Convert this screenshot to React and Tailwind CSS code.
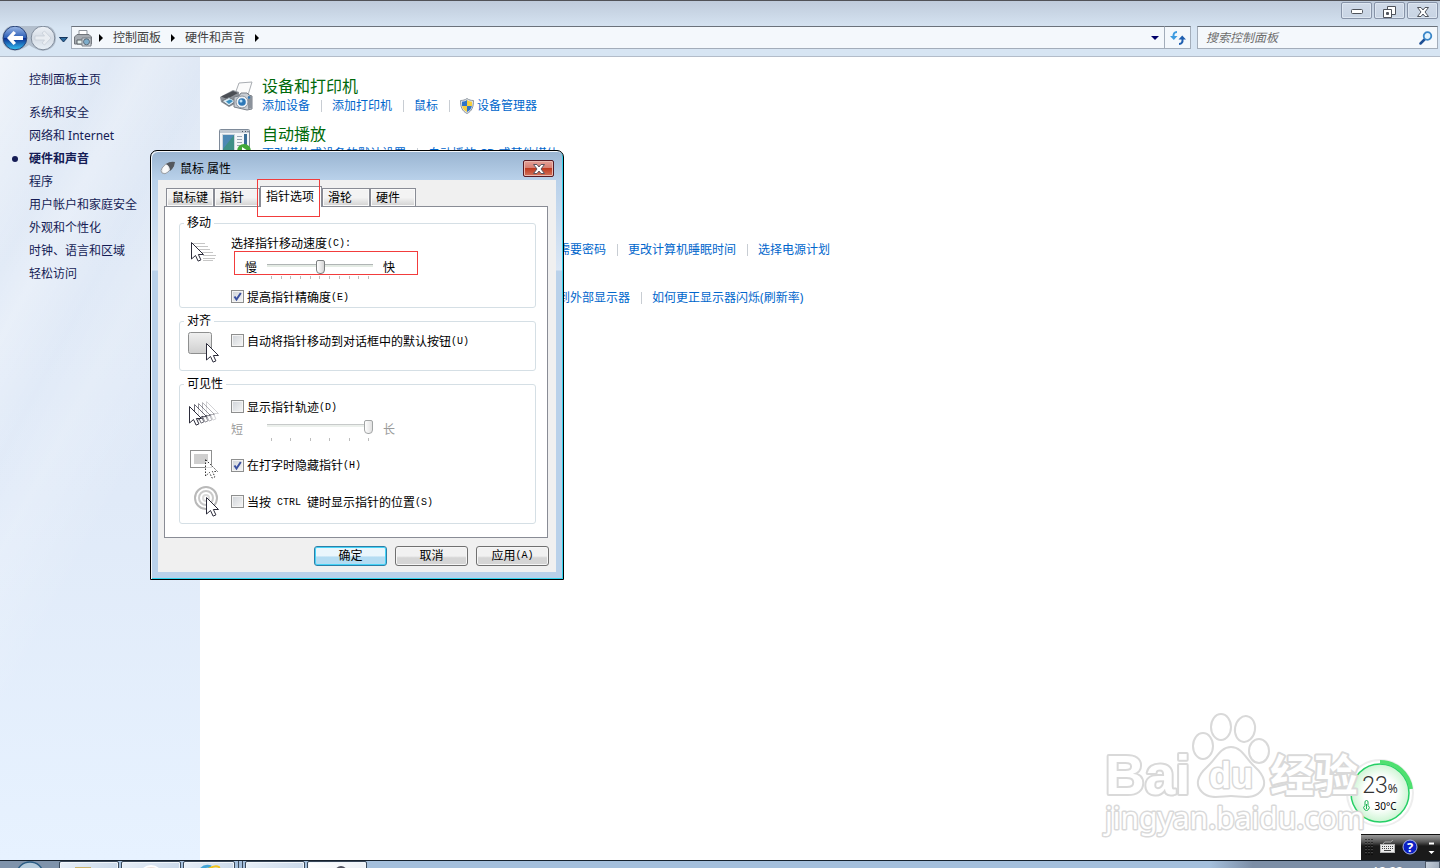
import React from 'react';
import clsx from 'clsx';

const NAV_ITEMS = [
  '系统和安全',
  '网络和 Internet',
  '硬件和声音',
  '程序',
  '用户帐户和家庭安全',
  '外观和个性化',
  '时钟、语言和区域',
  '轻松访问',
];

const CATEGORIES = [
  { title: '设备和打印机', icon: 'printer', links: ['添加设备', '添加打印机', '鼠标', '设备管理器'] },
  { title: '自动播放', icon: 'autoplay', links: ['更改媒体或设备的默认设置', '自动播放 CD 或其他媒体'] },
  { title: '声音', links: ['调整系统音量', '更改系统声音', '管理音频设备'] },
  {
    title: '电源选项',
    links: ['更改电池设置', '更改电源按钮的功能', '唤醒计算机时需要密码', '更改计算机睡眠时间', '选择电源计划'],
  },
  {
    title: '显示',
    links: ['放大或缩小文本和其他项目', '调整屏幕分辨率', '连接到外部显示器', '如何更正显示器闪烁(刷新率)'],
  },
];

const ARROW = 'M0 0V16.5L4 13L6.6 18.6L9.4 17.4L6.9 12H12Z';

const Cursor = ({ x = 0, y = 0, fill = '#fff', stroke = '#2b2b3a', dash, opacity = 1 }) => (
  <path
    d={ARROW}
    transform={`translate(${x + 0.5} ${y + 0.5})`}
    fill={fill}
    stroke={stroke}
    strokeDasharray={dash}
    opacity={opacity}
  />
);

const PrinterIcon = () => (
  <svg width="34" height="32" viewBox="0 0 34 32" aria-hidden="true">
    <path d="M16 13 20 2 33 1 29 14Z" fill="#fbfbfb" stroke="#a9adb2" />
    <path d="M1 16 14 9 20 11 20 21 10 26 2 21Z" fill="#8d9299" />
    <path d="M2 15.500 14 10 19 12 8 18Z" fill="#4b4f55" />
    <path d="M3 20 10 16.500 17 20 10 25Z" fill="#d7e8f2" stroke="#70757b" />
    <path d="M7 20.500 11 18.500 14 20 10 23Z" fill="#3a8fc0" />
    <path d="M15 16 20 15 22 12 28 12 30 14 33 15V28L28 29 15 26Z" fill="#c9ced4" stroke="#787f87" />
    <path d="M29 15H33V27L29 28Z" fill="#8b929b" />
    <circle cx="23" cy="21" r="6" fill="#eef2f6" stroke="#8a929c" />
    <circle cx="23" cy="21" r="3.800" fill="#2d78b8" />
    <circle cx="22" cy="20" r="1.500" fill="#b8def6" />
    <circle cx="30" cy="16.500" r="1.200" fill="#2d78b8" />
  </svg>
);

const AutoplayIcon = () => (
  <svg width="32" height="32" viewBox="0 0 32 32" aria-hidden="true">
    <rect x=".5" y=".5" width="30" height="30" rx="1" fill="#f4f6f8" stroke="#7e8a99" />
    <path d="M1 2.500H30" stroke="#c3cad3" strokeWidth="3" />
    <path d="M23 2.500h1M26 2.500h1M28.500 2.500h1" stroke="#4a5563" />
    <rect x="3.500" y="5.500" width="12" height="22" fill="#3f8f86" stroke="#ccd4dc" />
    <path d="M4 6H15L4 20Z" fill="#4d88b4" />
    <path d="M18 7.500h5M18 10.500h5M18 13.500h5M18 16.500h5" stroke="#9aa6b3" />
    <rect x="25" y="5" width="3" height="12" fill="#3a6d96" />
    <circle cx="25" cy="22" r="7" fill="#43a837" />
    <path d="M23 18 29 22 23 26Z" fill="#fff" />
  </svg>
);

const ShieldIcon = () => (
  <svg width="14" height="16" viewBox="0 0 14 16" className="mr-[3px]" aria-hidden="true">
    <path d="M7 .5C9 2 11 2.500 13.500 2.500 13.500 9 12 13 7 15.500 2 13 .5 9 .5 2.500 3 2.500 5 2 7 .5Z" fill="#dfe3e8" stroke="#8d959e" />
    <path d="M7 2C5.500 3 4 3.500 2 3.700V8H7Z" fill="#2f74c8" />
    <path d="M7 2C8.500 3 10 3.500 12 3.700V8H7Z" fill="#f7cf3c" />
    <path d="M2.200 8H7V14C4 12.500 2.600 10.500 2.200 8Z" fill="#f7cf3c" />
    <path d="M11.800 8H7V14C10 12.500 11.400 10.500 11.800 8Z" fill="#2f74c8" />
  </svg>
);

const Crumb = ({ children }) => (
  <>
    <svg width="4" height="8" viewBox="0 0 4 8" aria-hidden="true">
      <path d="M0 0 4 4 0 8Z" fill="#000" />
    </svg>
    {children && (
      <a href="#" className="mx-2.5 text-[#404040]">
        {children}
      </a>
    )}
  </>
);

const WindowButton = ({ label, children }) => (
  <button
    type="button"
    aria-label={label}
    className="flex h-[17px] w-[31px] items-center justify-center rounded-[2px] border border-[#8793a8] bg-linear-to-b from-[#d0dae8] to-[#c8d4e4] pt-0.5 shadow-[inset_0_0_0_1px_#dde6f1]"
  >
    {children}
  </button>
);

const TopBar = () => (
  <header className="flex flex-col border-t border-b border-t-[#515257] border-b-[#b3bcc9] bg-linear-to-b from-[#bfcbdb] to-[#d7e5f3] to-50%">
    <div className="flex h-[25px] justify-end gap-0.5 pt-px pr-0.5">
      <WindowButton label="最小化">
        <svg width="12" height="5" viewBox="0 0 12 5"><rect x=".5" y=".5" width="11" height="4" rx="1" fill="#fff" stroke="#4f535b" /></svg>
      </WindowButton>
      <WindowButton label="还原">
        <svg width="13" height="12" viewBox="0 0 13 12" fill="#fff" stroke="#4f535b">
          <path d="M4.500.5H12.500V8.500H4.500Z" />
          <path d="M.5 3.500H8.500V11.500H.5ZM3.500 6.500H5.500V8.500H3.500Z" fillRule="evenodd" />
        </svg>
      </WindowButton>
      <WindowButton label="关闭">
        <svg width="12" height="10" viewBox="0 0 12 10">
          <path d="M.5.5H4L6 3 8 .5H11.500L8 5 11.500 9.500H8L6 7 4 9.500H.5L4 5Z" fill="#fff" stroke="#4f535b" />
        </svg>
      </WindowButton>
    </div>
    <div className="flex h-[30px] items-start pr-0.5 text-xs">
      <div className="flex w-[71px] shrink-0 items-center">
        <svg width="70" height="26" viewBox="0 1 70 26" aria-hidden="true">
          <defs>
            <linearGradient id="back" x1="0" y1="0" x2="0" y2="1">
              <stop offset="0" stopColor="#9db9e6" />
              <stop offset=".48" stopColor="#2c5fb8" />
              <stop offset=".52" stopColor="#0b2f92" />
              <stop offset="1" stopColor="#35c4f4" />
            </linearGradient>
            <linearGradient id="fwd" x1="0" y1="0" x2="0" y2="1">
              <stop offset="0" stopColor="#eef2f7" />
              <stop offset=".5" stopColor="#d5dce5" />
              <stop offset="1" stopColor="#e9f0f7" />
            </linearGradient>
          </defs>
          <path d="M15 0H43Q56 1 56 13 56 24 43 26 36 25 29 20 22 25 15 26 2 24 2 13 3 1 15 0Z" fill="#b3bfcd" />
          <circle cx="15" cy="13" r="11.800" fill="url(#back)" stroke="#294478" />
          <path d="M7 13 13.500 6 16 8 13.500 11H23V15H13.500L16 18 13.500 20Z" fill="#fff" />
          <circle cx="43" cy="13" r="11.800" fill="url(#fwd)" stroke="#7f8b9b" />
          <path d="M51 13 44.500 6 42 8 44.500 11H35V15H44.500L42 18 44.500 20Z" fill="#e9edf2" stroke="#c4ccd6" strokeWidth=".7" />
          <path d="M59.500 12.500H67.500L63.500 17Z" fill="#2b6a9e" stroke="#14345c" />
        </svg>
      </div>
      <nav className="flex h-[23px] grow items-center border border-[#a3adba] border-t-[#6b727b] bg-[#f4f8fc] pl-0.5" aria-label="地址">
        <svg width="18" height="18" viewBox="0 0 18 18" className="mr-[7px]" aria-hidden="true">
          <path d="M5 1.500H13V7H5Z" fill="#fff" stroke="#8d939a" />
          <path d="M.5 8 3 5.500H15L17.500 8V15H.5Z" fill="#a6abb1" stroke="#70757b" />
          <path d="M3 11H10V15H3Z" fill="#e9f4f1" stroke="#5b6167" />
          <path d="M8 9H17V17H8Z" fill="#d3d8de" stroke="#7a8087" />
          <circle cx="12.500" cy="12.800" r="3" fill="#7dadcb" stroke="#5b6a77" />
        </svg>
        <Crumb>控制面板</Crumb>
        <Crumb>硬件和声音</Crumb>
        <Crumb />
        <button type="button" aria-label="以前的位置" className="mr-[5px] ml-auto">
          <svg width="8" height="4" viewBox="0 0 8 4"><path d="M0 0H8L4 4Z" fill="#00006a" /></svg>
        </button>
      </nav>
      <button type="button" aria-label="刷新" className="flex h-[23px] w-[26px] items-center justify-center border border-l-0 border-[#a3adba] border-t-[#6b727b] bg-[#f4f8fc]">
        <svg width="16" height="14" viewBox="0 0 16 14" aria-hidden="true">
          <path d="M7 1Q3 1 3.500 6" fill="none" stroke="#3d9be0" strokeWidth="2" />
          <path d="M0 5H7.500L3.800 9Z" fill="#3d9be0" />
          <path d="M9 13Q13 13 12.500 8" fill="none" stroke="#1f5fb0" strokeWidth="2" />
          <path d="M8.500 8.500H16L12.200 4.500Z" fill="#1f5fb0" />
        </svg>
      </button>
      <label className="ml-[6px] flex h-[23px] w-[241px] shrink-0 items-center border border-[#a3adba] border-t-[#6b727b] bg-[#f4f8fc] pr-1 pl-2">
        <input type="text" aria-label="搜索" placeholder="搜索控制面板" className="min-w-0 grow italic outline-none placeholder:text-[#6d6d6d]" />
        <svg width="14" height="14" viewBox="0 0 14 14" fill="none" aria-hidden="true">
          <path d="M6 8 1.500 12.500" stroke="#1d4f94" strokeWidth="2.500" strokeLinecap="round" />
          <circle cx="8.500" cy="5" r="3.800" fill="#e3f3fd" stroke="#3a86c8" strokeWidth="1.800" />
        </svg>
      </label>
    </div>
  </header>
);

const Sidebar = () => (
  <aside className="w-[200px] shrink-0 bg-[linear-gradient(118deg,#ffffff90_0%,#ffffff20_18%,#ffffff50_24%,#ffffff10_34%,#ffffff30_42%,#ffffff00_56%),linear-gradient(180deg,#dce6f4_0%,#e0eaf8_55%,#e7f2ff_100%)] pt-[11px] pl-3 text-xs leading-[23px] text-[#151c55]">
    <a href="#" className="ml-[17px] block">控制面板主页</a>
    <ul className="mt-2.5">
      {NAV_ITEMS.map((item) => {
        const current = item === '硬件和声音';
        return (
          <li key={item} className={clsx('flex items-center', current && 'font-bold')}>
            <span className="w-[17px]">
              {current && <span className="block size-1.5 rounded-full bg-[#151c55]" />}
            </span>
            <a href="#">{item}</a>
          </li>
        );
      })}
    </ul>
  </aside>
);

const Category = ({ title, icon, links }) => (
  <section className="flex h-12 items-start">
    <div className="w-[43px] shrink-0 pt-1.5">
      {icon === 'printer' && <PrinterIcon />}
      {icon === 'autoplay' && <AutoplayIcon />}
    </div>
    <div className="whitespace-nowrap">
      <h2 className="text-base leading-[23px] text-[#00690a]">
        <a href="#">{title}</a>
      </h2>
      <ul className="flex text-xs leading-4 text-[#0066cc]">
        {links.map((link, i) => (
          <li key={link} className="flex items-center">
            {i > 0 && <span className="mr-2.5 ml-[11px] h-3 w-px bg-[#c8cdd3]" />}
            {link === '设备管理器' && <ShieldIcon />}
            <a href="#">{link}</a>
          </li>
        ))}
      </ul>
    </div>
  </section>
);

const Key = ({ children }) => (
  <span className="font-['Liberation_Mono','Noto_Sans_CJK_SC',monospace] text-[10px] whitespace-pre">{children}</span>
);

const Check = ({ children, ...props }) => (
  <label className="flex h-[15px] items-center gap-[3px]">
    <span className="relative flex">
      <input
        type="checkbox"
        className="peer size-[13px] appearance-none border border-[#8e8f8f] bg-linear-to-br from-[#cfd3d8] to-[#f6f6f6] shadow-[inset_0_0_0_1px_#f4f4f4]"
        {...props}
      />
      <svg width="13" height="13" viewBox="0 0 13 13" className="pointer-events-none absolute inset-0 hidden peer-checked:block">
        <path d="M3.500 6.500 5.500 9.500 9.800 3" fill="none" stroke="#3a50a0" strokeWidth="2" />
      </svg>
    </span>
    <span className="flex items-center pt-0.5">{children}</span>
  </label>
);

const Slider = ({ label, ...props }) => (
  <input
    type="range"
    aria-label={label}
    className="h-3.5 w-[106px] appearance-none bg-[linear-gradient(#b0b5b5_1px,#e4ebe4_1px)] bg-size-[100%_3px] bg-position-[0_4px] bg-no-repeat disabled:opacity-70 [&::-webkit-slider-thumb]:h-3.5 [&::-webkit-slider-thumb]:w-[9px] [&::-webkit-slider-thumb]:appearance-none [&::-webkit-slider-thumb]:rounded-t-[2px] [&::-webkit-slider-thumb]:rounded-b-[4px] [&::-webkit-slider-thumb]:border [&::-webkit-slider-thumb]:border-[#7c7f80] [&::-webkit-slider-thumb]:bg-linear-to-r [&::-webkit-slider-thumb]:from-white [&::-webkit-slider-thumb]:to-[#d5d5d5]"
    {...props}
  />
);

const Ticks = ({ count }) => (
  <div className="ml-10 flex h-[3px] w-[98px] justify-between">
    {Array.from({ length: count }, (_, i) => (
      <span key={i} className="w-px bg-[#bdbdbd]" />
    ))}
  </div>
);

const Group = ({ title, children, className }) => (
  <fieldset className={clsx('min-w-0 rounded-[3px] border border-[#d5dfe5] pl-2', className)}>
    <legend className="-ml-1 px-[3px] leading-[14px]">{title}</legend>
    {children}
  </fieldset>
);

const Tab = ({ active, children, className }) => (
  <button
    type="button"
    role="tab"
    aria-selected={!!active}
    className={clsx(
      'border border-b-0 border-[#898c95] pt-px pl-[5px] text-left',
      active ? '-mb-px h-[21px] bg-white pb-0.5 pl-2' : 'h-[18px] bg-linear-to-b from-[#f3f3f3] from-50% to-[#d2d2d2] shadow-[inset_0_0_0_1px_#fafafa]',
      className
    )}
  >
    {children}
  </button>
);

const DialogButton = ({ primary, children }) => (
  <button
    type="button"
    className={clsx(
      'flex h-5 w-[73px] items-center justify-center rounded-[3px] border',
      primary
        ? 'border-[#2c7fa8] bg-linear-to-b from-[#eaf6fc] from-50% to-[#b4dcf2] to-55% shadow-[inset_0_0_0_1px_#46d3f7]'
        : 'border-[#707070] bg-linear-to-b from-[#f1f1f1] from-50% to-[#d5d5d5] to-60% shadow-[inset_0_0_0_1px_#f6f6f6]'
    )}
  >
    {children}
  </button>
);

const MouseDialog = () => (
  <div
    role="dialog"
    aria-label="鼠标 属性"
    className="absolute top-[150px] left-[150px] w-[414px] rounded-t-[7px] border border-black bg-[linear-gradient(#99b4d1_0px,#b9d1ea_29px,#dbe7f5_119px,#b9d1ea_120px)] px-[7px] pb-[7px] text-xs text-black shadow-[inset_1px_1px_0_#f4f8fc,inset_-1px_-1px_0_#2fd3ee]"
  >
    <div className="flex h-[29px] items-center pt-1.5 pl-0.5">
      <svg width="17" height="16" viewBox="0 0 17 16" className="mb-0.5" aria-hidden="true">
        <path d="M2 8Q5 3 10 3L14 6 8 12Q5 15 2 13 0 11 2 8Z" fill="#e9ebed" stroke="#9a9fa6" />
        <path d="M6 4Q10 1 15 2L14 6Q12 10 10 11 10 6 6 4Z" fill="#54585e" />
        <path d="M3 8Q5 5 7 5 9 8 8 11 5 14 3 12Z" fill="#fafafa" />
      </svg>
      <span className="ml-[3px]">鼠标 属性</span>
      <button
        type="button"
        aria-label="关闭"
        className="mr-0.5 ml-auto flex h-[17px] w-[31px] items-center justify-center rounded-[2px] border border-[#571a24] bg-[linear-gradient(#e5a198_0%,#d77f72_45%,#bf3a20_50%,#d2745c_100%)] shadow-[inset_0_0_0_1px_#eab9b0]"
      >
        <svg width="12" height="10" viewBox="0 0 12 10">
          <path d="M.5.5H4L6 3 8 .5H11.500L8 5 11.500 9.500H8L6 7 4 9.500H.5L4 5Z" fill="#fff" stroke="#5b5560" />
        </svg>
      </button>
    </div>
    <div className="bg-[#f0f0f0] pb-1.5">
      <div className="relative ml-2 flex h-[26px] items-end" role="tablist">
        <Tab className="w-12">鼠标键</Tab>
        <Tab className="w-[46px]">指针</Tab>
        <Tab active className="z-10 w-[62px]">指针选项</Tab>
        <Tab className="w-12">滑轮</Tab>
        <Tab className="w-[46px]">硬件</Tab>
        {/* highlight around the selected tab */}
        <span className="pointer-events-none absolute -top-px left-[91px] z-20 h-[38px] w-[63px] border border-[#f23c3c]" />
      </div>
      <div role="tabpanel" className="mr-2 ml-1.5 flex flex-col gap-1.5 border border-[#898c95] bg-white pt-[9px] pr-[11px] pb-[13px] pl-3.5">
        <Group title="移动" className="h-[92px]">
          <div className="flex">
            <div className="w-[43px] shrink-0 pt-3 pl-[3px]">
              <svg width="26" height="24" viewBox="0 0 26 24" aria-hidden="true">
                <path d="M2 1.500h12M5 4.500h12M8 7.500h11M10 10.500h12M12 13.500h13M12 16.500h12M12 18.500h10" stroke="#c6c6c6" />
                <Cursor />
              </svg>
            </div>
            <div className="pt-1.5">
              <p className="flex h-[15px] items-center">选择指针移动速度<Key>(C):</Key></p>
              <div className="ml-[3px] flex h-6 w-[184px] items-end gap-2.5 border border-[#f23c3c] pl-2.5 leading-[13px]">
                <span>慢</span>
                <Slider label="选择指针移动速度" min={0} max={10} defaultValue={5} />
                <span>快</span>
              </div>
              <div className="mt-px mb-2.5"><Ticks count={11} /></div>
              <Check defaultChecked>提高指针精确度<Key>(E)</Key></Check>
            </div>
          </div>
        </Group>
        <Group title="对齐" className="h-[57px]">
          <div className="flex items-start">
            <div className="w-[43px] shrink-0 pt-1">
              <svg width="31" height="32" viewBox="0 0 31 32" aria-hidden="true">
                <defs>
                  <linearGradient id="snap" x1="0" y1="0" x2="0" y2="1">
                    <stop offset="0" stopColor="#f0f0f0" />
                    <stop offset="1" stopColor="#cfcfcf" />
                  </linearGradient>
                </defs>
                <rect x=".5" y=".5" width="23" height="21" rx="2" fill="url(#snap)" stroke="#8e8f8f" />
                <Cursor x={18} y={11} />
              </svg>
            </div>
            <div className="pt-[5px]">
              <Check>自动将指针移动到对话框中的默认按钮<Key>(U)</Key></Check>
            </div>
          </div>
        </Group>
        <Group title="可见性" className="h-[147px]">
          <div className="flex h-14">
            <div className="w-[43px] shrink-0 pt-2.5">
              <svg width="33" height="28" viewBox="0 0 33 28" aria-hidden="true">
                <Cursor x={18} y={0} opacity={0.2} />
                <Cursor x={14} y={1} opacity={0.35} />
                <Cursor x={10} y={2} opacity={0.5} />
                <Cursor x={6} y={3} opacity={0.7} />
                <Cursor x={1} y={5} />
              </svg>
            </div>
            <div className="pt-2">
              <Check>显示指针轨迹<Key>(D)</Key></Check>
              <div className="mt-1.5 flex items-start text-[#9a9a9a]">
                <span className="w-9 pt-0.5 leading-4">短</span>
                <Slider label="显示指针轨迹" min={0} max={5} defaultValue={5} disabled />
                <span className="ml-2.5 pt-0.5 leading-4">长</span>
              </div>
              <Ticks count={6} />
            </div>
          </div>
          <div className="flex h-9 items-center">
            <div className="w-[43px] shrink-0 pl-0.5">
              <svg width="28" height="30" viewBox="0 0 28 30" aria-hidden="true">
                <rect x=".5" y=".5" width="21" height="17" fill="#fff" stroke="#8e8f8f" />
                <rect x="4" y="4" width="14" height="10" fill="#cfcfcf" />
                <Cursor x={15} y={9} stroke="#333" fill="#ffffffb0" dash="1.5 1.5" />
              </svg>
            </div>
            <Check defaultChecked>在打字时隐藏指针<Key>(H)</Key></Check>
          </div>
          <div className="flex h-[37px] items-center">
            <div className="w-[43px] shrink-0 pl-1.5">
              <svg width="26" height="32" viewBox="0 0 26 32" fill="none" aria-hidden="true">
                <circle cx="12" cy="12" r="11" stroke="#b9b9b9" strokeWidth="2" />
                <circle cx="12" cy="12" r="7" stroke="#c9c9c9" strokeWidth="2" />
                <circle cx="12" cy="12" r="3" stroke="#dadada" strokeWidth="2" />
                <Cursor x={12} y={11} />
              </svg>
            </div>
            <Check>当按<Key> CTRL </Key>键时显示指针的位置<Key>(S)</Key></Check>
          </div>
        </Group>
      </div>
      <div className="mt-2 mr-[7px] flex justify-end gap-2">
        <DialogButton primary>确定</DialogButton>
        <DialogButton>取消</DialogButton>
        <DialogButton>应用<Key>(A)</Key></DialogButton>
      </div>
    </div>
  </div>
);

const Watermark = () => (
  <svg
    width="270"
    height="134"
    viewBox="0 0 270 134"
    className="pointer-events-none absolute right-[70px] bottom-[24px] z-20"
    fill="#ffffff"
    stroke="#d9d9d9"
    strokeWidth="4"
    strokeLinejoin="round"
    aria-hidden="true"
  >
    <text x="5" y="84" paintOrder="stroke" className="font-['Liberation_Sans',sans-serif] text-[55px] font-bold">Bai</text>
    <g strokeWidth="2">
      <ellipse cx="103" cy="36" rx="10" ry="13" />
      <ellipse cx="121" cy="17" rx="10" ry="13" />
      <ellipse cx="145" cy="19" rx="10" ry="13" transform="rotate(10 145 19)" />
      <ellipse cx="159" cy="41" rx="10" ry="12" />
      <path d="M131 37C142 37 146 49 155 57 165 66 167 75 160 82 152 90 140 86 131 86 122 86 110 90 102 82 95 75 97 66 107 57 116 49 120 37 131 37Z" />
    </g>
    <text x="109" y="78" strokeWidth="3" paintOrder="stroke" className="font-['Liberation_Sans',sans-serif] text-[36px] font-bold">du</text>
    <text x="170" y="82" paintOrder="stroke" className="font-['Noto_Sans_CJK_SC',sans-serif] text-[44px] font-bold">经验</text>
    <text x="5" y="119" strokeWidth="3" paintOrder="stroke" className="font-['Noto_Sans',sans-serif] text-[30px]">jingyan.baidu.com</text>
  </svg>
);

const TempGauge = () => (
  <div className="absolute right-[26px] bottom-[41px] z-10 flex size-[68px] flex-col items-center justify-center text-[#333]">
    <svg width="68" height="68" viewBox="0 0 68 68" className="absolute inset-0" fill="none" aria-hidden="true">
      <defs>
        <radialGradient id="gauge">
          <stop offset=".55" stopColor="#fff" />
          <stop offset="1" stopColor="#cdf5d3" />
        </radialGradient>
      </defs>
      <circle cx="34" cy="34" r="33" fill="#fff" stroke="#ededed" strokeWidth="2" />
      <circle cx="34" cy="34" r="29" fill="url(#gauge)" stroke="#26cf66" strokeWidth="1.500" />
      <path d="M34 3A31 31 0 0 1 65 30" stroke="#4fe070" strokeWidth="4" />
    </svg>
    <div className="relative flex items-baseline pt-px leading-6">
      <span className="font-['Roboto','Lato',sans-serif] text-[23px] font-light">23</span>
      <span className="text-xs">%</span>
    </div>
    <div className="relative flex items-center gap-1 text-[10px] leading-4 text-black">
      <svg width="7" height="11" viewBox="0 0 7 11" fill="none" stroke="#18b352" aria-hidden="true">
        <path d="M2 5.500V2A1.500 1.500 0 0 1 5 2V5.500A2.700 2.700 0 1 1 2 5.500Z" />
        <path d="M3.500 4V9" />
      </svg>
      <span>30°C</span>
    </div>
  </div>
);

const LanguageBar = () => (
  <div className="absolute right-0 bottom-2 z-30 flex h-[26px] w-[79px] items-center bg-[linear-gradient(#111_1px,#9a9a9a_1px,#555_8px,#1a1a1a_12px)] pl-1">
    <svg width="75" height="20" viewBox="0 0 75 20" fill="none" aria-hidden="true">
      <path d="M1 2V18M4 2V18M7 2V18" stroke="#000" strokeWidth="1" strokeDasharray="1 2" />
      <path d="M1 3V18M4 3V18M7 3V18" stroke="#666" strokeWidth="1" strokeDasharray="1 2" />
      <path d="M18 7Q19 4 23 5 26 6 28 3" stroke="#a8a8a8" />
      <rect x="15.500" y="7.500" width="14" height="8" fill="#ececec" stroke="#b5b5b5" />
      <path d="M17 9.500H28M17 11.500H28" stroke="#444" strokeDasharray="1 1" />
      <path d="M19 13.500H26" stroke="#444" />
      <circle cx="45" cy="10" r="7" fill="#0b1fc4" stroke="#a9b5e6" />
      <text x="45" y="15" textAnchor="middle" fill="#fff" className="text-[13px] font-bold">?</text>
      <path d="M64 6.500H69" stroke="#fff" strokeWidth="2" />
      <path d="M63.500 14H69.500L66.500 17Z" fill="#fff" />
    </svg>
  </div>
);

const TaskButton = ({ label, className, children }) => (
  <button
    type="button"
    aria-label={label}
    className={clsx(
      'flex h-10 items-start justify-center overflow-hidden rounded-t-[2px] border border-[#39485a] bg-linear-to-br from-[#e9f0f8] to-[#b3c7de] shadow-[inset_0_0_0_1px_#f0f5fa]',
      className
    )}
  >
    {children}
  </button>
);

const Taskbar = () => (
  <footer className="relative flex h-2 shrink-0 items-start overflow-hidden border-t border-[#15202c] bg-[linear-gradient(90deg,#7f93ab_0px,#7f93ab_60px,#a4bfdc_62px,#a4bfdc_84%,#7c8ea6_87%)]">
    <button type="button" aria-label="开始" className="flex w-[59px] shrink-0 justify-center">
      <svg width="28" height="12" viewBox="0 0 28 12"><ellipse cx="14" cy="13" rx="13" ry="12" fill="#b5cbdc" stroke="#2b5d84" strokeWidth="1.500" /></svg>
    </button>
    <TaskButton label="资源管理器" className="w-[60px]"><span className="mt-[5px] -ml-3 h-3 w-4 bg-[#cdb36a]" /></TaskButton>
    <TaskButton label="媒体播放器" className="ml-0.5 w-[60px]"><span className="mt-[3px] size-6 rounded-full border-t-2 border-white bg-[#efe4df]" /></TaskButton>
    <TaskButton label="浏览器" className="ml-0.5 w-[52px]">
      <svg width="24" height="12" viewBox="0 0 24 12" className="mt-[2px]"><path d="M2 8Q7 0 14 3" fill="none" stroke="#43a5d6" strokeWidth="3" /><path d="M7 8Q17 0 22 3 23 5 20 9" fill="none" stroke="#f3c51b" strokeWidth="2" /></svg>
    </TaskButton>
    <span className="h-10 w-1 border-r border-[#39485a]" />
    <span className="h-10 w-1 border-r border-[#39485a]" />
    <TaskButton label="控制面板" className="ml-0.5 w-[60px]" />
    <TaskButton label="鼠标 属性" className="ml-0.5 w-[60px] from-white to-[#dde5ee]"><span className="mt-[4px] ml-2 h-3 w-3 rounded-t-full bg-[#4d4f5d]" /></TaskButton>
    <span className="mt-[3px] ml-auto text-xs leading-4 text-white">13:22</span>
    <button type="button" aria-label="显示桌面" className="ml-[22px] h-10 w-[15px] shrink-0 border border-[#4c5868] bg-linear-to-br from-[#c3cdd9] to-[#8594a8]" />
  </footer>
);

export default function App() {
  return (
    <div className="relative flex h-screen flex-col overflow-hidden bg-white font-['Noto_Sans','Noto_Sans_CJK_SC',sans-serif]">
      <TopBar />
      <div className="flex min-h-0 grow">
        <Sidebar />
        <main className="min-w-0 grow pt-[18px] pl-[19px]">
          {CATEGORIES.map((category) => (
            <Category key={category.title} {...category} />
          ))}
        </main>
      </div>
      <Taskbar />
      <MouseDialog />
      <TempGauge />
      <Watermark />
      <LanguageBar />
    </div>
  );
}
